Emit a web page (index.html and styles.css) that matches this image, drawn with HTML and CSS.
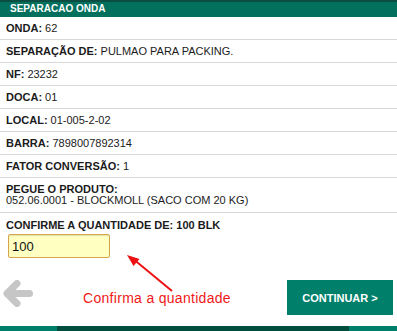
FILE: index.html
```html
<!DOCTYPE html>
<html lang="pt-BR">
<head>
    <meta charset="UTF-8">
    <meta name="viewport" content="width=device-width, initial-scale=1.0">
    <title>Separacao Onda</title>
    <link rel="stylesheet" href="styles.css">
</head>
<body>
    <div class="header">SEPARACAO ONDA</div>

    <div class="info-list">
        <div class="row"><b>ONDA:</b> 62</div>
        <div class="row"><b>SEPARAÇÃO DE:</b> PULMAO PARA PACKING.</div>
        <div class="row"><b>NF:</b> 23232</div>
        <div class="row"><b>DOCA:</b> 01</div>
        <div class="row"><b>LOCAL:</b> 01-005-2-02</div>
        <div class="row"><b>BARRA:</b> 7898007892314</div>
        <div class="row"><b>FATOR CONVERSÃO:</b> 1</div>
        <div class="row row-tall">
            <b>PEGUE O PRODUTO:</b><br>
            052.06.0001 - BLOCKMOLL (SACO COM 20 KG)
        </div>
    </div>

    <form class="confirm" id="confirmForm">
        <label for="qtd">CONFIRME A QUANTIDADE DE: 100 BLK</label>
        <input type="text" id="qtd" name="qtd" value="100">

        <div class="actions">
            <a class="back-link" href="#">
                <svg width="30" height="27" viewBox="0 0 30 27">
                    <path d="M4 13.5 H26.5 M4 13.5 L14 3.5 M4 13.5 L14 23.5" fill="none" stroke="#c6c6c6" stroke-width="7" stroke-linecap="round" stroke-linejoin="round"/>
                </svg>
            </a>
            <button type="submit" class="btn-continue">CONTINUAR &gt;</button>
        </div>
    </form>

    <!-- anotação sobre a tela -->
    <div class="note">
        <svg class="note-arrow" width="60" height="45" viewBox="0 0 60 45">
            <line x1="50" y1="41" x2="10" y2="8" stroke="#ee1111" stroke-width="2"/>
            <polygon points="5,5 17.5,9 11.5,16" fill="#ee1111"/>
        </svg>
        <span class="note-text">Confirma a quantidade</span>
    </div>

    <div class="bottom-bar">
        <span class="bar-light"></span>
        <span class="bar-dark"></span>
        <span class="bar-end"></span>
    </div>
</body>
</html>
```

FILE: styles.css
```css
body {
    font-family: "Liberation Sans", Arial, sans-serif;
    margin: 0;
    padding: 0;
    background: #ffffff;
    color: #1b1b1b;
    height: 100vh;
    display: flex;
    flex-direction: column;
    position: relative;
}
.header {
    background-color: #036f5d;
    border-top: 2px solid #0b4d42;
    height: 15px;
    line-height: 14px;
    padding-left: 10px;
    color: #ffffff;
    font-size: 10px;
    font-weight: bold;
}
.row {
    font-size: 11px;
    line-height: 11px;
    padding: 6px 6px 5px;
    border-bottom: 1px solid #d8d8d8;
}
.row-tall {
    padding-bottom: 6px;
}
.confirm {
    padding: 7px 4px 0 6px;
    display: flex;
    flex-direction: column;
    align-items: flex-start;
}
.confirm label {
    font-size: 11px;
    line-height: 11px;
    font-weight: bold;
}
.confirm input {
    box-sizing: border-box;
    width: 102px;
    height: 24px;
    margin: 3px 0 0 2px;
    padding: 2px 3px;
    background-color: #ffffc2;
    border: 1px solid #d9a54c;
    border-radius: 2px;
    box-shadow: inset 0 1px 1px rgba(0, 0, 0, 0.12);
    font-family: "Liberation Sans", Arial, sans-serif;
    font-size: 13px;
    color: #111;
}
.actions {
    align-self: stretch;
    display: flex;
    justify-content: space-between;
    align-items: flex-start;
    margin-top: 22px;
    margin-left: -3px;
}
.back-link {
    display: block;
    height: 27px;
}
.btn-continue {
    width: 106px;
    height: 35px;
    background-color: #00806a;
    color: #ffffff;
    font-family: "Liberation Sans", Arial, sans-serif;
    font-size: 11px;
    font-weight: bold;
    border: none;
    cursor: pointer;
}
.note {
    position: absolute;
    left: 0;
    top: 0;
}
.note-arrow {
    position: absolute;
    left: 122px;
    top: 250px;
}
.note-text {
    position: absolute;
    left: 83px;
    top: 290px;
    white-space: nowrap;
    color: #f01818;
    font-size: 14px;
    letter-spacing: 0.3px;
}
.bottom-bar {
    margin-top: auto;
    height: 5px;
    display: flex;
}
.bar-light {
    width: 57px;
    background-color: #00806a;
}
.bar-dark {
    flex: 1;
    background-color: #004d3d;
}
.bar-end {
    width: 48px;
    background-color: #00806a;
}
```
